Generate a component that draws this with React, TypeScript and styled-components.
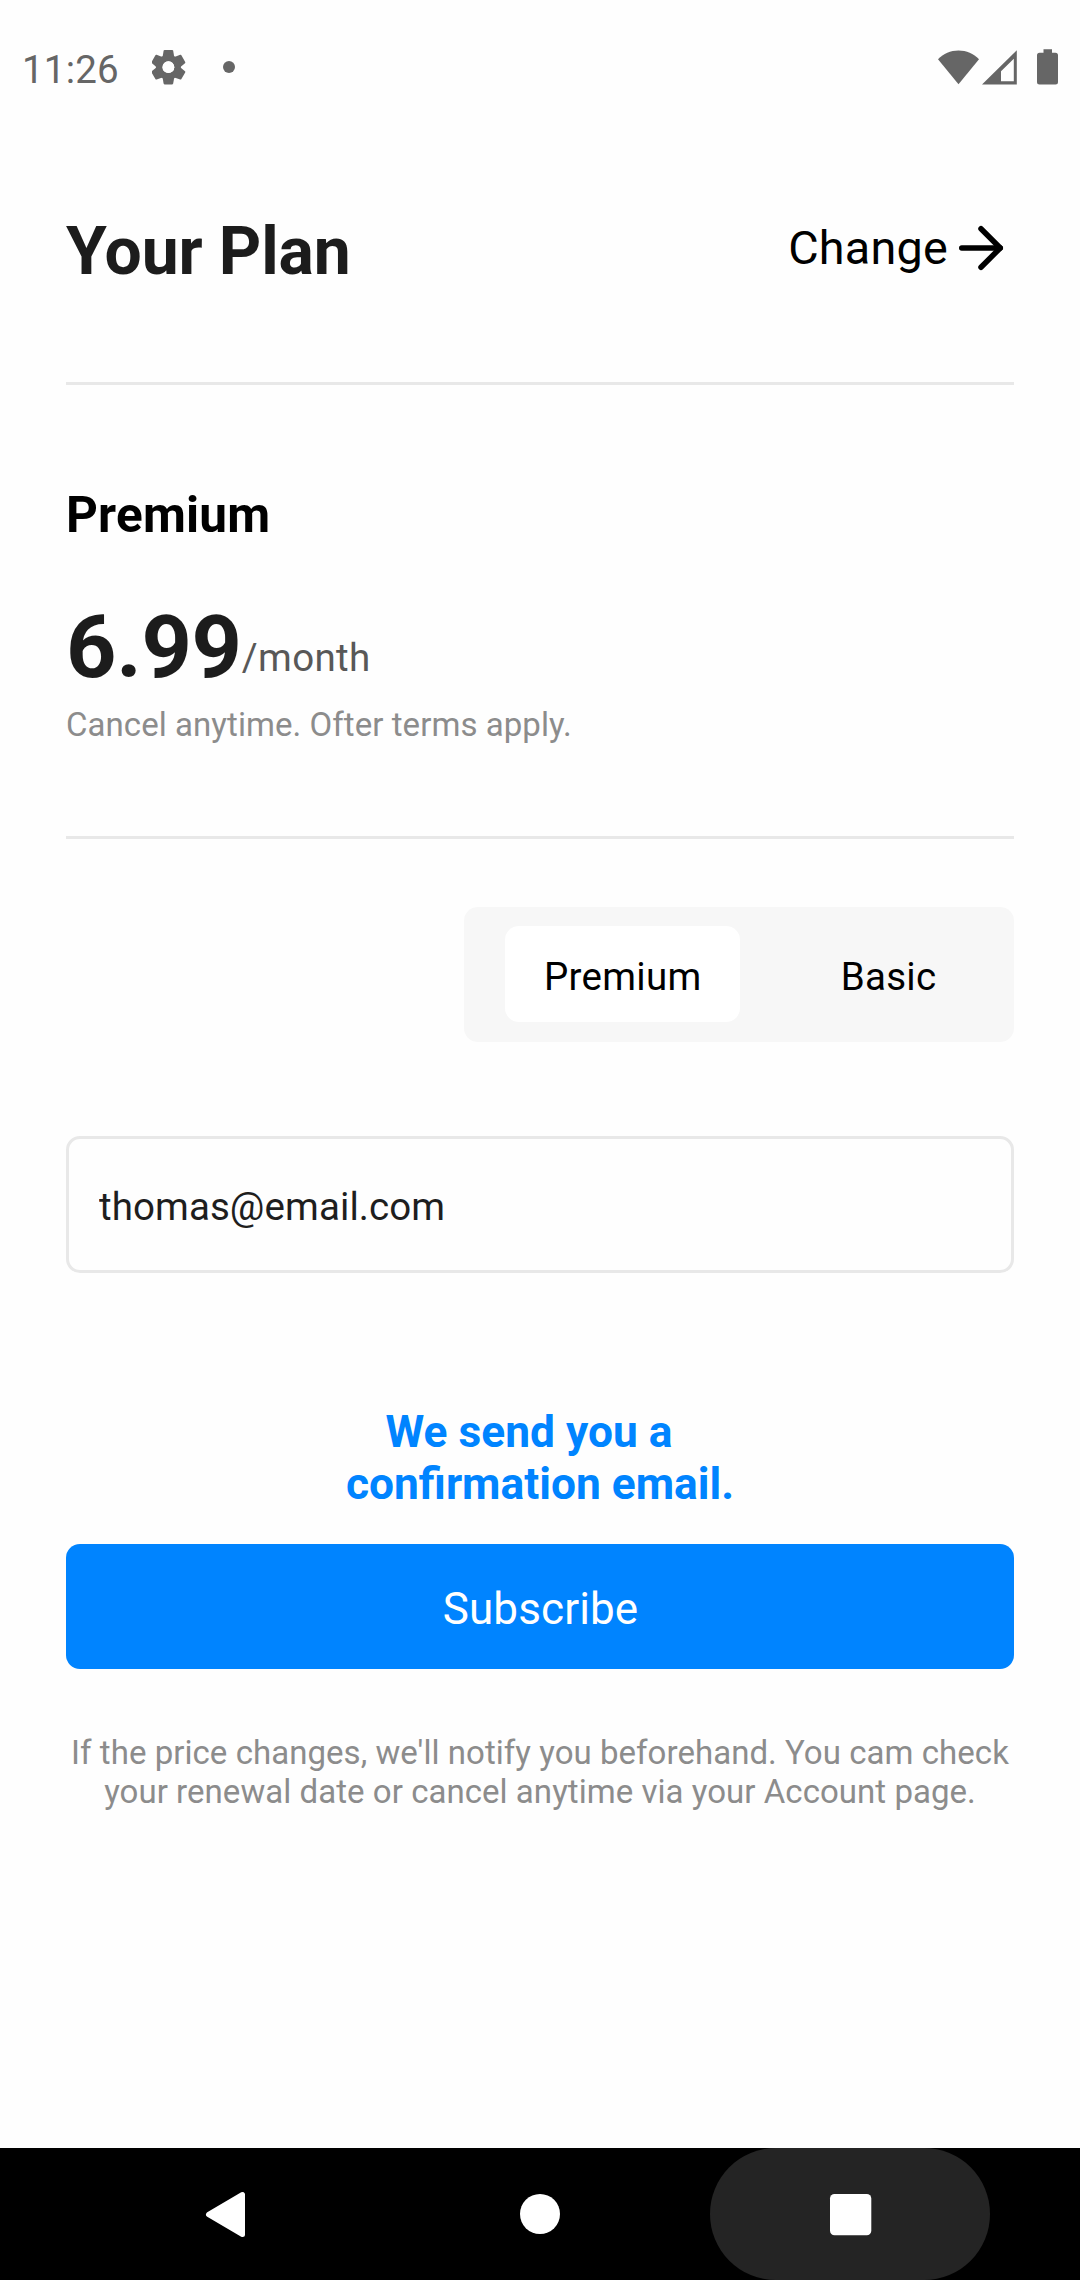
import React, { useState } from "react";
import styled, { createGlobalStyle } from "styled-components";

const GlobalStyle = createGlobalStyle`
  *, *::before, *::after { box-sizing: border-box; }
  body { margin: 0; background: #fefefe; }
  button, input { font: inherit; margin: 0; padding: 0; border: 0; background: none; color: inherit; }
`;

const Screen = styled.div`
  width: 1080px;
  height: 2280px;
  display: flex;
  flex-direction: column;
  overflow: hidden;
  background: #fefefe;
  font-family: Roboto, "Liberation Sans", sans-serif;
  color: #000;
`;

const StatusBar = styled.header`
  height: 136px;
  flex: none;
  display: flex;
  align-items: flex-start;
  justify-content: space-between;
  padding: 46px 20px 0 22px;
  color: #666;
`;

const StatusGroup = styled.div`
  display: flex;
  align-items: flex-start;
`;

const Clock = styled.span`
  width: 130px;
  padding-top: 1px;
  font-size: 38.5px;
  line-height: 46px;
  letter-spacing: 0.2px;
`;

const Content = styled.main`
  flex: 1;
  display: flex;
  flex-direction: column;
  padding: 0 66px;
`;

const PlanHeader = styled.section`
  height: 249px;
  display: flex;
  justify-content: space-between;
  align-items: flex-start;
  padding-top: 77px;
  border-bottom: 3px solid #e8e8e8;
`;

const Title = styled.h1`
  margin: 0;
  font-size: 66px;
  line-height: 77px;
  font-weight: 700;
  letter-spacing: -0.15px;
  color: #1c1c1c;
`;

const ChangeButton = styled.button`
  display: flex;
  align-items: center;
  height: 66px;
  margin-top: 2px;
  font-size: 46.75px;
  line-height: 55px;
  letter-spacing: 0.22px;
`;

const PlanDetails = styled.section`
  height: 454px;
  padding-top: 101px;
  border-bottom: 3px solid #e8e8e8;
`;

const PlanName = styled.h2`
  margin: 0;
  font-size: 49.5px;
  line-height: 58px;
  font-weight: 700;
  letter-spacing: 0.2px;
`;

const PriceRow = styled.div`
  display: flex;
  align-items: flex-end;
  margin-top: 51px;
`;

const Price = styled.span`
  font-size: 88px;
  line-height: 104px;
  font-weight: 700;
  letter-spacing: -0.3px;
  color: #1c1c1c;
`;

const Period = styled.span`
  padding-bottom: 19px;
  font-size: 38.5px;
  line-height: 45px;
  letter-spacing: 0.35px;
  color: #585858;
`;

const Terms = styled.p`
  margin: 6px 0 0;
  font-size: 33px;
  line-height: 39px;
  letter-spacing: 0.06px;
  color: #8c8c8c;
`;

const Toggle = styled.div`
  align-self: flex-end;
  width: 550px;
  height: 135px;
  margin-top: 68px;
  padding: 19px 39px 20px 41px;
  display: flex;
  justify-content: space-between;
  border-radius: 14px;
  background: #f7f7f7;
`;

const ToggleOption = styled.button<{ $active: boolean }>`
  height: 96px;
  padding: 0 38.5px 0 39px;
  border-radius: 14px;
  background: ${({ $active }) => ($active ? "#fff" : "transparent")};
  font-size: 38.5px;
  line-height: 101px;
  letter-spacing: 0.3px;
`;

const EmailField = styled.input`
  width: 100%;
  height: 137px;
  margin-top: 94px;
  padding: 3px 30px 0;
  border: 3px solid #e8e8e8;
  border-radius: 14px;
  font-size: 38.5px;
  letter-spacing: 0.09px;
  color: #1e1e1e;
  outline: none;
`;

const Confirmation = styled.p`
  margin: 133px 0 0;
  text-align: center;
  font-size: 44.3px;
  line-height: 52px;
  font-weight: 700;
  color: #0084ff;
`;

const ConfirmationLine = styled.span<{ $trailing?: number }>`
  display: block;
  padding-right: ${({ $trailing = 0 }) => $trailing}px;
`;

const Subscribe = styled.button`
  height: 125px;
  margin-top: 34px;
  padding: 5px 0 0 1px;
  border-radius: 14px;
  background: #0084ff;
  color: #fff;
  font-size: 44px;
  line-height: 52px;
  letter-spacing: 0.12px;
`;

const Note = styled.p`
  margin: 64px 0 0;
  text-align: center;
  font-size: 33px;
  line-height: 39px;
  letter-spacing: 0.045px;
  color: #8c8c8c;
`;

const NavBar = styled.nav`
  flex: none;
  height: 132px;
  display: flex;
  justify-content: space-between;
  padding: 0 90px;
  background: #000;
`;

const NavButton = styled.button<{ $pressed?: boolean }>`
  width: 280px;
  height: 132px;
  display: flex;
  border-radius: 66px;
  background: ${({ $pressed }) => ($pressed ? "#242424" : "transparent")};
`;

const Block = styled.svg`
  display: block;
  flex: none;
`;

const toothAngles = [0, 60, 120, 180, 240, 300];

function NotificationIcons() {
  return (
    <Block width="100" height="44" viewBox="152 46 100 44" fill="currentColor">
      <g transform="translate(168.4 67.2)">
        {toothAngles.map((angle) => (
          <path
            key={angle}
            transform={`rotate(${angle})`}
            d="M-3.8-17.2H3.8Q4.6-17.2 4.8-16.4L5.7-11V-8H-5.7V-11L-4.8-16.4Q-4.6-17.2-3.8-17.2Z"
          />
        ))}
        <circle r="9.2" fill="none" stroke="currentColor" strokeWidth="6.6" />
        <circle r="5.9" fill="#fefefe" />
      </g>
      <circle cx="229" cy="67" r="6" />
    </Block>
  );
}

function SystemIcons() {
  return (
    <Block width="124" height="42" viewBox="936 46 124 42" fill="currentColor">
      <path d="M938 59.3C943.5 53.6 950.5 50.5 958.5 50.5C966.5 50.5 973.5 53.6 979 59.3L958.5 84.3Z" />
      <path fillRule="evenodd" d="M982 84.5L1016.8 50.3V84.5ZM1001 81.3H1013.8V58.7L1001 71.3Z" />
      <path d="M1043.5 49.3h8.5v3.5h3.5a2.5 2.5 0 0 1 2.5 2.5v26.7a2.5 2.5 0 0 1-2.5 2.5h-16a2.5 2.5 0 0 1-2.5-2.5v-26.7a2.5 2.5 0 0 1 2.5-2.5h4z" />
    </Block>
  );
}

function ArrowIcon() {
  return (
    <Block
      width="66"
      height="66"
      viewBox="0 0 24 24"
      fill="none"
      stroke="currentColor"
      strokeWidth="2"
      strokeLinecap="round"
      strokeLinejoin="round"
    >
      <path d="M5 12h14" />
      <path d="m12 5 7 7-7 7" />
    </Block>
  );
}

const plans = ["Premium", "Basic"];

export default function App() {
  const [plan, setPlan] = useState("Premium");
  const [email, setEmail] = useState("thomas@email.com");

  return (
    <>
      <GlobalStyle />
      <Screen>
        <StatusBar>
          <StatusGroup>
            <Clock>11:26</Clock>
            <NotificationIcons />
          </StatusGroup>
          <SystemIcons />
        </StatusBar>

        <Content>
          <PlanHeader>
            <Title>Your Plan</Title>
            <ChangeButton>
              Change
              <ArrowIcon />
            </ChangeButton>
          </PlanHeader>

          <PlanDetails>
            <PlanName>Premium</PlanName>
            <PriceRow>
              <Price>6.99</Price>
              <Period>/month</Period>
            </PriceRow>
            <Terms>Cancel anytime. Ofter terms apply.</Terms>
          </PlanDetails>

          <Toggle>
            {plans.map((name) => (
              <ToggleOption key={name} $active={name === plan} onClick={() => setPlan(name)}>
                {name}
              </ToggleOption>
            ))}
          </Toggle>

          <EmailField value={email} onChange={(e) => setEmail(e.target.value)} />

          <Confirmation>
            <ConfirmationLine $trailing={22}>We send you a</ConfirmationLine>
            <ConfirmationLine>confirmation email.</ConfirmationLine>
          </Confirmation>
          <Subscribe>Subscribe</Subscribe>
          <Note>
            If the price changes, we'll notify you beforehand. You cam check
            <br />
            your renewal date or cancel anytime via your Account page.
          </Note>
        </Content>

        <NavBar>
          <NavButton aria-label="Back">
            <Block width="280" height="132" viewBox="90 2148 280 132">
              <path
                d="M208.5 2214.5L242.5 2194.5V2234.5Z"
                fill="#fff"
                stroke="#fff"
                strokeWidth="5"
                strokeLinejoin="round"
              />
            </Block>
          </NavButton>
          <NavButton aria-label="Home">
            <Block width="280" height="132" viewBox="400 2148 280 132">
              <circle cx="540" cy="2214" r="20" fill="#fff" />
            </Block>
          </NavButton>
          <NavButton aria-label="Recents" $pressed>
            <Block width="280" height="132" viewBox="710 2148 280 132">
              <rect x="830" y="2194" width="41.3" height="41.3" rx="4.5" fill="#fff" />
            </Block>
          </NavButton>
        </NavBar>
      </Screen>
    </>
  );
}
